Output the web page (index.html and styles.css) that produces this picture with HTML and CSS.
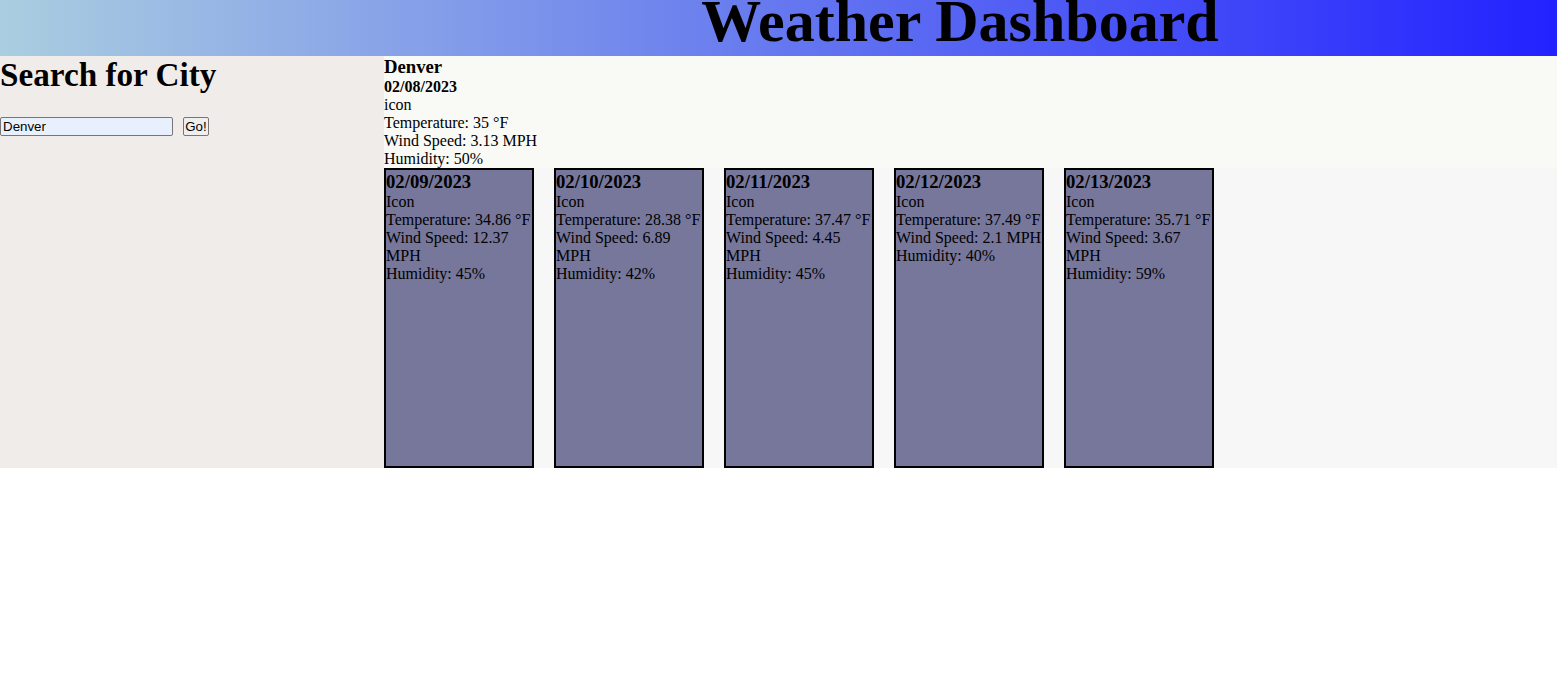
FILE: index.html
```html
<!DOCTYPE html>
<html lang="en">
<head>
<meta charset="utf-8">
<title>Weather Dashboard</title>
<link rel="stylesheet" href="styles.css">
</head>
<body>
<header class="top-bar">
  <h1 class="title">Weather Dashboard</h1>
</header>
<div class="layout">
  <aside class="sidebar">
    <h2 class="search-title">Search for City</h2>
    <form class="search-form">
      <input class="city-input" type="text" value="Denver">
      <button class="go-btn" type="button">Go!</button>
    </form>
  </aside>
  <main class="content">
    <section class="current">
      <h3 class="city-name">Denver</h3>
      <div class="current-date">02/08/2023</div>
      <div class="line">icon</div>
      <div class="line">Temperature: 35 °F</div>
      <div class="line">Wind Speed: 3.13 MPH</div>
      <div class="line">Humidity: 50%</div>
    </section>
    <section class="forecast">
      <div class="card">
        <h3 class="card-date">02/09/2023</h3>
        <div class="line">Icon</div>
        <div class="line">Temperature: 34.86 °F</div>
        <div class="line">Wind Speed: 12.37 MPH</div>
        <div class="line">Humidity: 45%</div>
      </div>
      <div class="card">
        <h3 class="card-date">02/10/2023</h3>
        <div class="line">Icon</div>
        <div class="line">Temperature: 28.38 °F</div>
        <div class="line">Wind Speed: 6.89 MPH</div>
        <div class="line">Humidity: 42%</div>
      </div>
      <div class="card">
        <h3 class="card-date">02/11/2023</h3>
        <div class="line">Icon</div>
        <div class="line">Temperature: 37.47 °F</div>
        <div class="line">Wind Speed: 4.45 MPH</div>
        <div class="line">Humidity: 45%</div>
      </div>
      <div class="card">
        <h3 class="card-date">02/12/2023</h3>
        <div class="line">Icon</div>
        <div class="line">Temperature: 37.49 °F</div>
        <div class="line">Wind Speed: 2.1 MPH</div>
        <div class="line">Humidity: 40%</div>
      </div>
      <div class="card">
        <h3 class="card-date">02/13/2023</h3>
        <div class="line">Icon</div>
        <div class="line">Temperature: 35.71 °F</div>
        <div class="line">Wind Speed: 3.67 MPH</div>
        <div class="line">Humidity: 59%</div>
      </div>
    </section>
  </main>
</div>
</body>
</html>
```
FILE: styles.css
```css
html, body {
  margin: 0;
  padding: 0;
  background: #ffffff;
  font-family: "Liberation Serif", "Times New Roman", serif;
  font-size: 16px;
  color: #000;
}

.top-bar {
  height: 56px;
  overflow: hidden;
  background: linear-gradient(to right, #aacee0, #2222ff);
  padding-left: 363px;
  text-align: center;
}

.title {
  margin: 0;
  font-size: 60px;
  line-height: 42px;
  font-weight: bold;
}

.layout {
  display: flex;
}

.sidebar {
  width: 384px;
  flex: none;
  background: #f0ece9;
}

.search-title {
  margin: 0 0 24px;
  font-size: 33.2px;
  line-height: 37px;
  font-weight: bold;
}

.search-form {
  display: flex;
  gap: 10px;
  margin: 0;
}

.city-input {
  width: 173px;
  height: 19px;
  box-sizing: border-box;
  margin: 0;
  padding: 0 2px;
  border: 1px solid #767676;
  border-radius: 2px;
  background: #e8f0fe;
  font-family: "Liberation Sans", Arial, sans-serif;
  font-size: 13.33px;
  color: #000;
}

.go-btn {
  width: 26px;
  height: 19px;
  box-sizing: border-box;
  margin: 0;
  padding: 0;
  border: 1px solid #767676;
  border-radius: 2px;
  background: #efefef;
  font-family: "Liberation Sans", Arial, sans-serif;
  font-size: 13.33px;
  color: #000;
}

.content {
  flex: 1;
  display: flex;
  flex-direction: column;
}

.current {
  background: #f9f9f5;
}

.city-name {
  margin: 0;
  font-size: 18.72px;
  line-height: 22px;
  font-weight: bold;
}

.current-date {
  font-weight: bold;
  line-height: 18px;
}

.line {
  line-height: 18px;
}

.forecast {
  display: flex;
  gap: 20px;
  background: #f7f7f7;
}

.card {
  width: 150px;
  height: 300px;
  box-sizing: border-box;
  border: 2px solid #000;
  background: #77779b;
}

.card-date {
  margin: 0;
  padding-top: 1px;
  font-size: 18.72px;
  line-height: 22px;
  font-weight: bold;
}
```
